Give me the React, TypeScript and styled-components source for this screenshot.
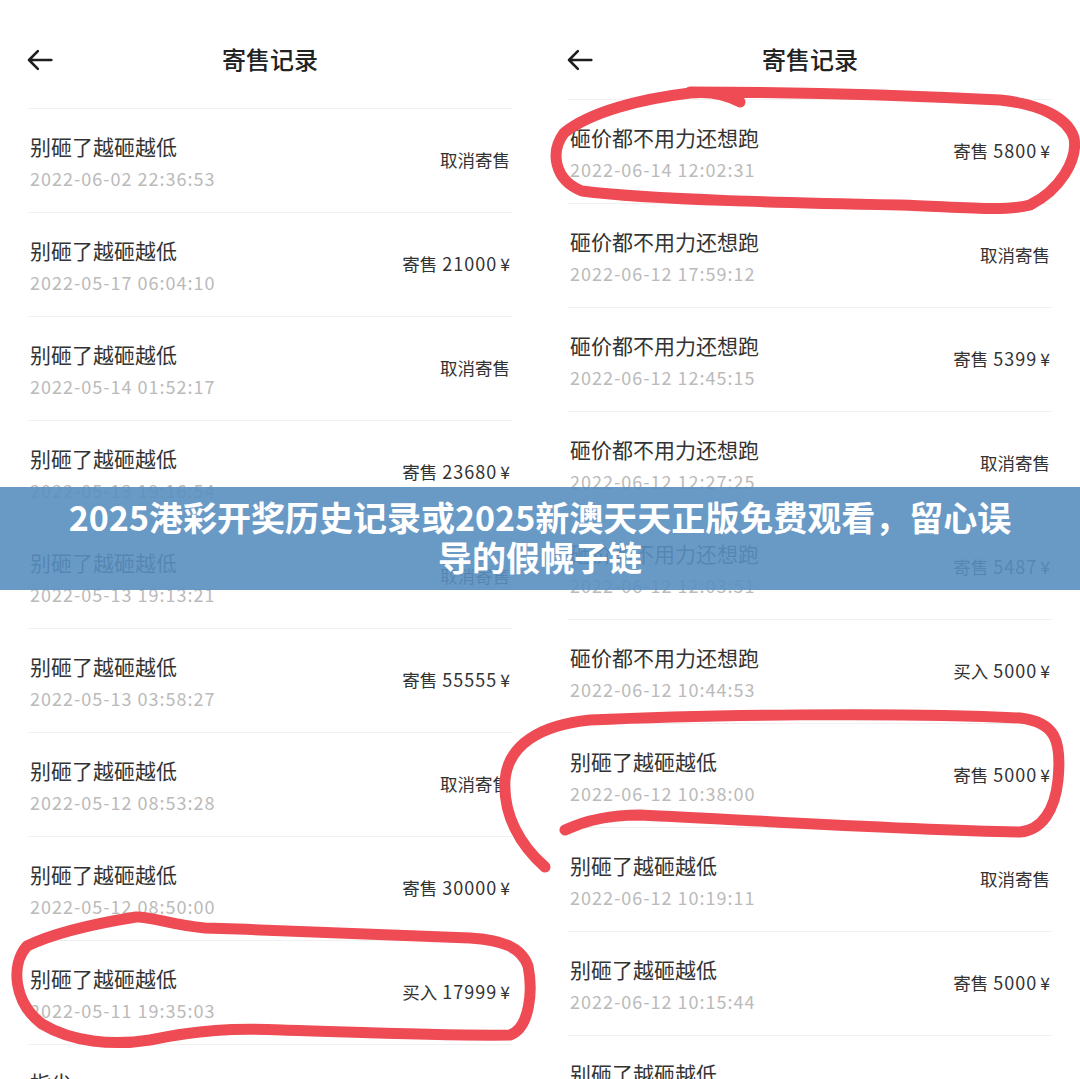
import React from 'react';
import styled, { createGlobalStyle } from 'styled-components';

interface Record {
  title: string;
  date: string;
  action: string;
  amount?: string;
}

const leftRecords: Record[] = [
  { title: '别砸了越砸越低', date: '2022-06-02 22:36:53', action: '取消寄售' },
  { title: '别砸了越砸越低', date: '2022-05-17 06:04:10', action: '寄售', amount: '21000' },
  { title: '别砸了越砸越低', date: '2022-05-14 01:52:17', action: '取消寄售' },
  { title: '别砸了越砸越低', date: '2022-05-13 19:16:54', action: '寄售', amount: '23680' },
  { title: '别砸了越砸越低', date: '2022-05-13 19:13:21', action: '取消寄售' },
  { title: '别砸了越砸越低', date: '2022-05-13 03:58:27', action: '寄售', amount: '55555' },
  { title: '别砸了越砸越低', date: '2022-05-12 08:53:28', action: '取消寄售' },
  { title: '别砸了越砸越低', date: '2022-05-12 08:50:00', action: '寄售', amount: '30000' },
  { title: '别砸了越砸越低', date: '2022-05-11 19:35:03', action: '买入', amount: '17999' },
  { title: '指尖', date: '', action: '' },
];

const rightRecords: Record[] = [
  { title: '砸价都不用力还想跑', date: '2022-06-14 12:02:31', action: '寄售', amount: '5800' },
  { title: '砸价都不用力还想跑', date: '2022-06-12 17:59:12', action: '取消寄售' },
  { title: '砸价都不用力还想跑', date: '2022-06-12 12:45:15', action: '寄售', amount: '5399' },
  { title: '砸价都不用力还想跑', date: '2022-06-12 12:27:25', action: '取消寄售' },
  { title: '砸价都不用力还想跑', date: '2022-06-12 12:03:51', action: '寄售', amount: '5487' },
  { title: '砸价都不用力还想跑', date: '2022-06-12 10:44:53', action: '买入', amount: '5000' },
  { title: '别砸了越砸越低', date: '2022-06-12 10:38:00', action: '寄售', amount: '5000' },
  { title: '别砸了越砸越低', date: '2022-06-12 10:19:11', action: '取消寄售' },
  { title: '别砸了越砸越低', date: '2022-06-12 10:15:44', action: '寄售', amount: '5000' },
  { title: '别砸了越砸越低', date: '2022-06-12 10:09:37', action: '取消寄售' },
];

function Panel({ records, headerHeight }: { records: Record[]; headerHeight: number }) {
  return (
    <StyledPanel>
      <StyledHeader height={headerHeight}>
        <StyledBack viewBox="0 0 26 26" aria-label="返回">
          <path d="M23.5 13H2.8M11 4.8L2.8 13l8.2 8.2" />
        </StyledBack>
        <StyledHeaderTitle>寄售记录</StyledHeaderTitle>
        <span />
      </StyledHeader>
      <StyledList>
        {records.map((r, i) => (
          <StyledRow key={i}>
            <StyledInfo>
              <StyledTitle>{r.title}</StyledTitle>
              <StyledDate>{r.date || '\u00a0'}</StyledDate>
            </StyledInfo>
            <StyledAction>
              {r.action}
              {r.amount && <StyledAmount>{r.amount}</StyledAmount>}
              {r.amount && <StyledYen>¥</StyledYen>}
            </StyledAction>
          </StyledRow>
        ))}
      </StyledList>
    </StyledPanel>
  );
}

function App() {
  return (
    <>
      <GlobalStyle />
      <StyledPage>
        <Panel records={leftRecords} headerHeight={108} />
        <Panel records={rightRecords} headerHeight={99} />
        <StyledMarks viewBox="0 0 1080 1079">
          <path d="M740,102 Q718,90 690,93 C640,99 590,112 564,133 C550,152 554,180 582,191 C650,200 800,203 900,205 C960,207 1005,212 1030,205 C1060,190 1078,160 1074,138 C1068,118 1040,104 1000,100 C900,95 780,92 690,92" />
          <path d="M136,917 C105,922 60,930 27,946 C10,965 14,1003 42,1024 C72,1042 112,1046 150,1040 C198,1030 232,1028 282,1030 C380,1033 450,1036 510,1035 C530,1028 533,990 528,966 C521,946 500,940 470,938 C400,935 300,931 205,928 C170,925 150,916 136,917" />
          <path d="M545,867 C520,845 503,815 505,780 C508,745 540,725 590,720 C700,715 900,712 1020,718 C1055,722 1062,740 1058,780 C1055,810 1042,830 1020,832 C900,830 750,820 640,815 C600,815 578,824 565,830" />
        </StyledMarks>
        <StyledBanner>
          <StyledBannerText>2025港彩开奖历史记录或2025新澳天天正版免费观看，留心误导的假幌子链</StyledBannerText>
        </StyledBanner>
      </StyledPage>
    </>
  );
}

const GlobalStyle = createGlobalStyle`
  html, body {
    margin: 0;
    padding: 0;
    background: #ffffff;
  }
  body {
    font-family: 'Noto Sans CJK SC', 'Noto Sans', sans-serif;
  }
`;

const StyledPage = styled.div`
  position: relative;
  display: flex;
  width: 1080px;
  height: 1079px;
  overflow: hidden;
  background: #ffffff;
`;

const StyledPanel = styled.section`
  display: flex;
  flex-direction: column;
  width: 540px;
  flex-shrink: 0;
`;

const StyledHeader = styled.header<{ height: number }>`
  display: grid;
  grid-template-columns: 1fr auto 1fr;
  align-items: start;
  height: ${({ height }) => height}px;
  padding: 42px 26px 0;
  box-sizing: border-box;
  flex-shrink: 0;
`;

const StyledBack = styled.svg`
  width: 28px;
  height: 28px;
  margin-top: 4px;
  fill: none;
  stroke: #1e1e1e;
  stroke-width: 2.4;
  stroke-linecap: round;
  stroke-linejoin: round;
`;

const StyledHeaderTitle = styled.h1`
  margin: 0;
  font-size: 24px;
  line-height: 34px;
  font-weight: 500;
  color: #222222;
`;

const StyledList = styled.ul`
  margin: 0;
  padding: 0;
  list-style: none;
`;

const StyledRow = styled.li`
  display: flex;
  align-items: center;
  justify-content: space-between;
  height: 104px;
  margin: 0 28px;
  padding: 0 2px;
  box-sizing: border-box;
  border-top: 1px solid #f0f0f0;
`;

const StyledInfo = styled.div`
  display: flex;
  flex-direction: column;
  gap: 5px;
`;

const StyledTitle = styled.p`
  margin: 0;
  font-size: 21px;
  line-height: 29px;
  color: #333333;
`;

const StyledDate = styled.span`
  font-size: 18px;
  line-height: 24px;
  letter-spacing: 1px;
  color: #bababa;
`;

const StyledAction = styled.span`
  margin-top: -2px;
  font-size: 17.5px;
  line-height: 24px;
  color: #333333;
  white-space: pre;
`;

const StyledAmount = styled.span`
  margin-left: 5px;
  font-size: 18px;
  letter-spacing: 1px;
`;

const StyledYen = styled.span`
  margin-left: 3px;
`;

const StyledMarks = styled.svg`
  position: absolute;
  top: 0;
  left: 0;
  width: 1080px;
  height: 1079px;
  pointer-events: none;
  fill: none;
  stroke: #ee4b55;
  stroke-width: 11;
  stroke-linecap: round;
  stroke-linejoin: round;
`;

const StyledBanner = styled.div`
  position: absolute;
  top: 487px;
  left: 0;
  display: flex;
  align-items: center;
  justify-content: center;
  width: 1080px;
  height: 103px;
  box-sizing: border-box;
  background: rgba(89, 143, 192, 0.9);
`;

const StyledBannerText = styled.p`
  max-width: 955px;
  margin: -4px 0 0;
  font-size: 34px;
  line-height: 40px;
  font-weight: 700;
  color: #ffffff;
  text-align: center;
`;

export default App;
